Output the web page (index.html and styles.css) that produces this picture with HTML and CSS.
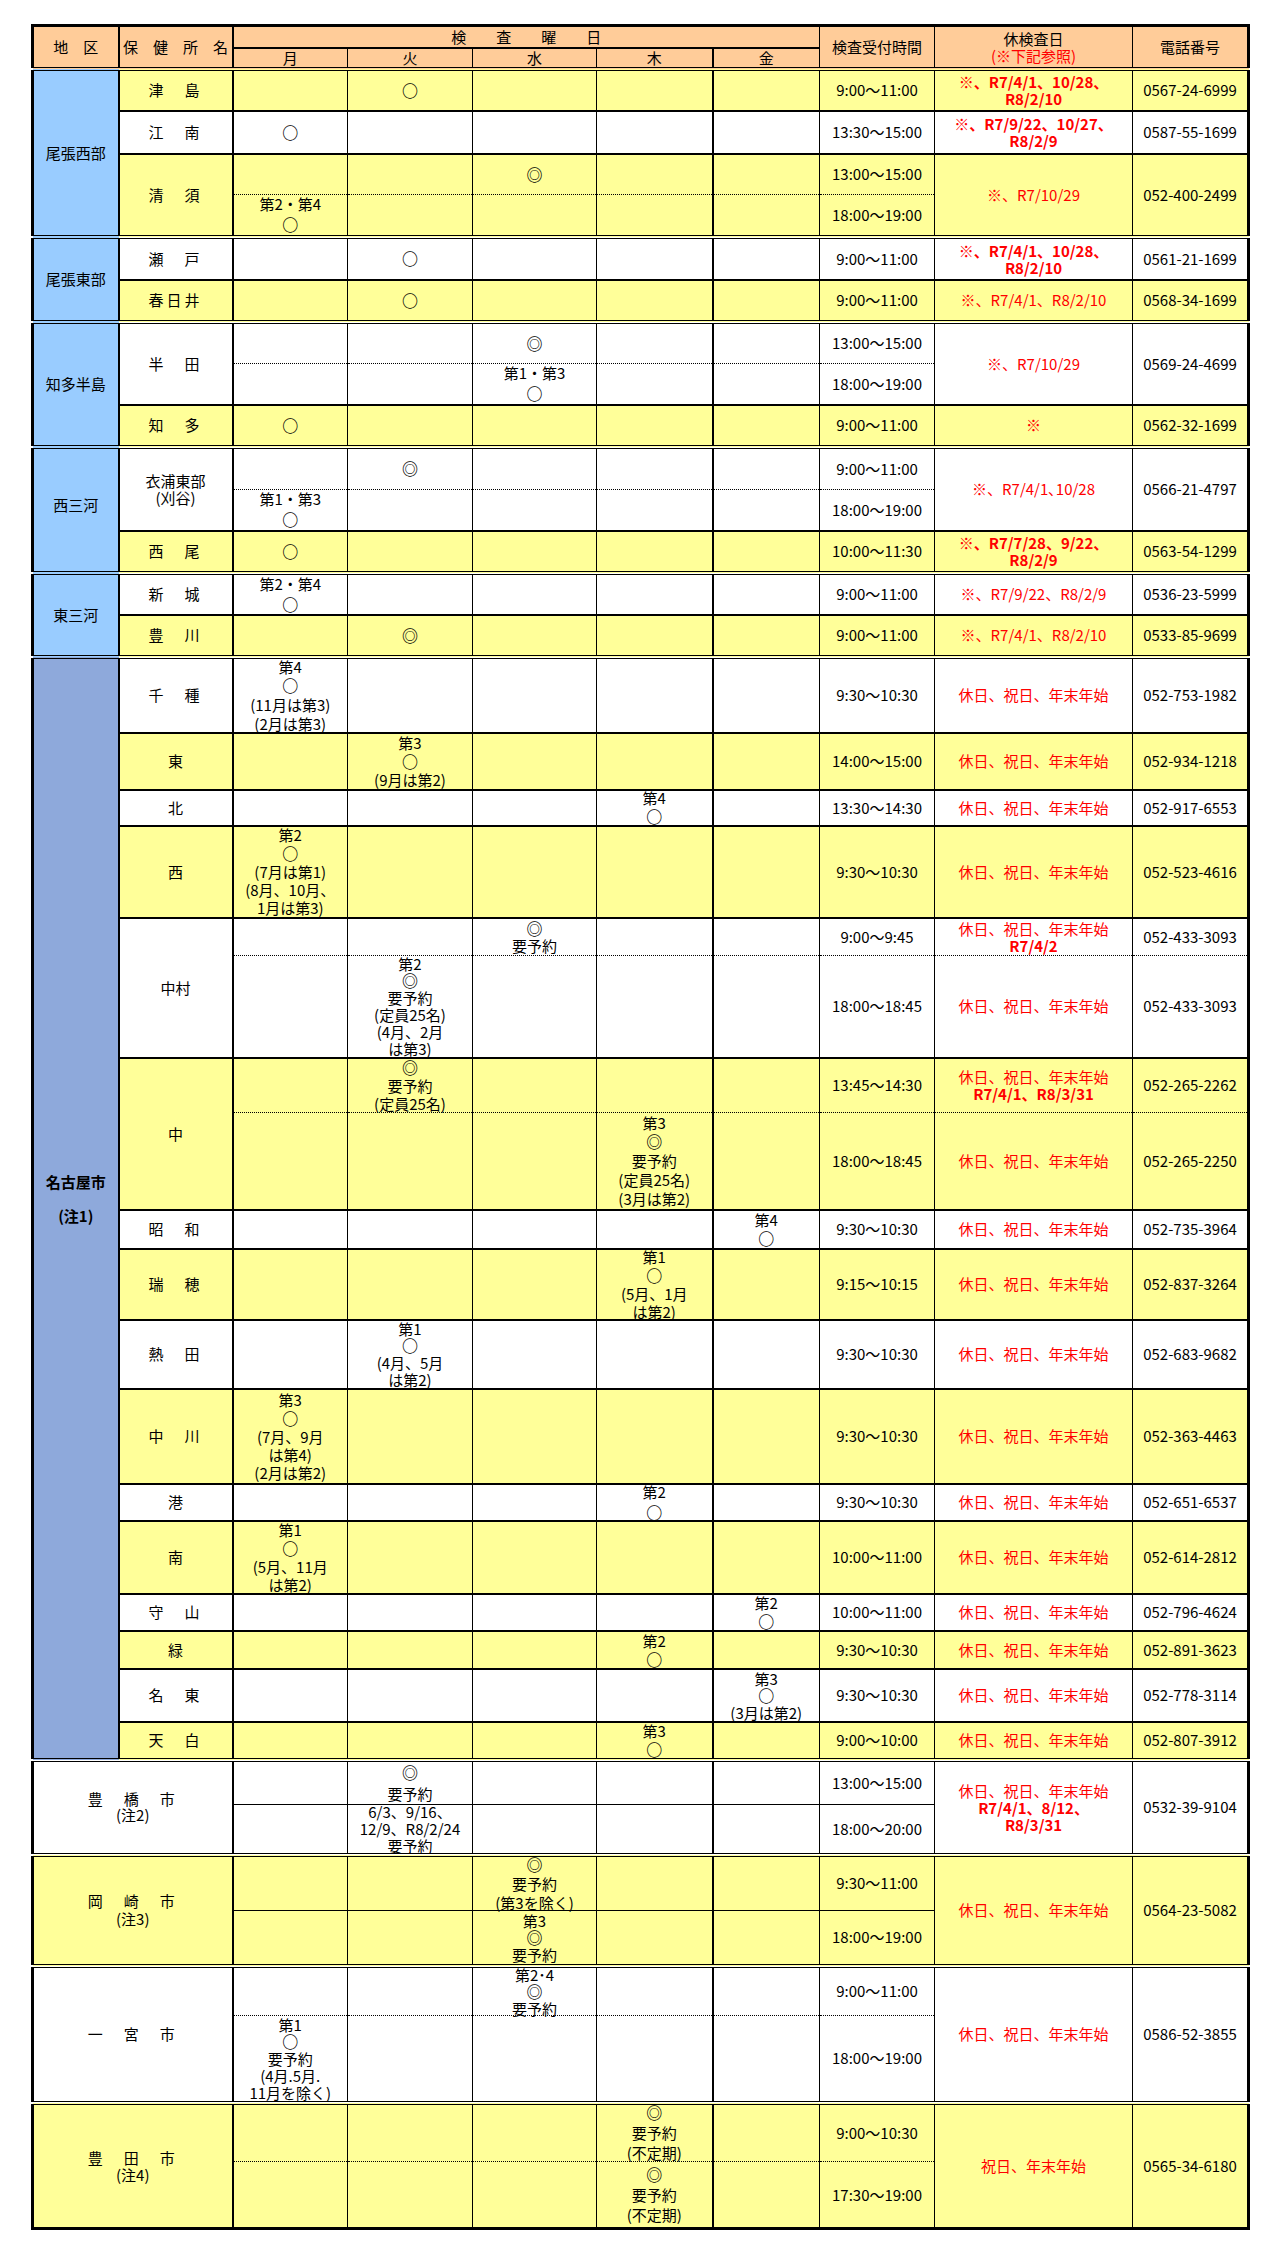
FILE: index.html
```html
<!DOCTYPE html>
<html lang="ja">
<head>
<meta charset="utf-8">
<title>検査日程一覧</title>
<link rel="stylesheet" href="styles.css">
</head>
<body>
<div class="sheet">
<table class="t">
<colgroup>
<col class="c-area b2"><col class="c-name b2"><col class="c-mon"><col class="c-tue"><col class="c-wed"><col class="c-thu b2"><col class="c-fri"><col class="c-time"><col class="c-off"><col class="c-tel">
</colgroup>
<thead>
<tr class="h22">
<th rowspan="2">地　区</th>
<th rowspan="2">保　健　所　名</th>
<th colspan="5" class="days">検　　査　　曜　　日</th>
<th rowspan="2">検査受付時間</th>
<th rowspan="2"><div class="v l17"><div>休検査日<br><span class="red">(※下記参照)</span></div></div></th>
<th rowspan="2">電話番号</th>
</tr>
<tr class="h20"><th>月</th><th>火</th><th>水</th><th>木</th><th>金</th></tr>
</thead>

<tbody class="reg">
<tr class="fac y h42">
<td rowspan="4" class="area">尾張西部</td>
<td class="sp">津　島</td>
<td></td><td><span class="o">○</span></td><td></td><td></td><td></td>
<td>9:00～11:00</td>
<td class="off"><div class="v l17"><div class="bd">※、R7/4/1、10/28、<br>R8/2/10</div></div></td>
<td>0567-24-6999</td>
</tr>
<tr class="fac h43">
<td class="sp">江　南</td>
<td><span class="o">○</span></td><td></td><td></td><td></td><td></td>
<td>13:30～15:00</td>
<td class="off"><div class="v l17"><div class="bd">※、R7/9/22、10/27、<br>R8/2/9</div></div></td>
<td>0587-55-1699</td>
</tr>
<tr class="fac y h41">
<td rowspan="2" class="sp">清　須</td>
<td class="d"></td><td class="d"></td><td class="d"><span class="o">◎</span></td><td class="d"></td><td class="d"></td>
<td class="d">13:00～15:00</td>
<td rowspan="2" class="off bd">※、R7/10/29</td>
<td rowspan="2">052-400-2499</td>
</tr>
<tr class="y h42">
<td><div class="v l20"><div>第2・第4<br><span class="o">○</span></div></div></td><td></td><td></td><td></td><td></td>
<td>18:00～19:00</td>
</tr>
</tbody>

<tbody class="reg">
<tr class="fac h43">
<td rowspan="2" class="area">尾張東部</td>
<td class="sp">瀬　戸</td>
<td></td><td><span class="o">○</span></td><td></td><td></td><td></td>
<td>9:00～11:00</td>
<td class="off"><div class="v l17"><div class="bd">※、R7/4/1、10/28、<br>R8/2/10</div></div></td>
<td>0561-21-1699</td>
</tr>
<tr class="fac y h42">
<td class="sp">春日井</td>
<td></td><td><span class="o">○</span></td><td></td><td></td><td></td>
<td>9:00～11:00</td>
<td class="off bd">※、R7/4/1、R8/2/10</td>
<td>0568-34-1699</td>
</tr>
</tbody>

<tbody class="reg">
<tr class="fac h42">
<td rowspan="3" class="area">知多半島</td>
<td rowspan="2" class="sp">半　田</td>
<td class="d"></td><td class="d"></td><td class="d"><span class="o">◎</span></td><td class="d"></td><td class="d"></td>
<td class="d">13:00～15:00</td>
<td rowspan="2" class="off bd">※、R7/10/29</td>
<td rowspan="2">0569-24-4699</td>
</tr>
<tr class="h41">
<td></td><td></td><td><div class="v l20"><div>第1・第3<br><span class="o">○</span></div></div></td><td></td><td></td>
<td>18:00～19:00</td>
</tr>
<tr class="fac y h42">
<td class="sp">知　多</td>
<td><span class="o">○</span></td><td></td><td></td><td></td><td></td>
<td>9:00～11:00</td>
<td class="off bd">※</td>
<td>0562-32-1699</td>
</tr>
</tbody>

<tbody class="reg">
<tr class="fac h43">
<td rowspan="3" class="area up10">西三河</td>
<td rowspan="2"><div class="v l17"><div>衣浦東部<br>(刈谷)</div></div></td>
<td class="d"></td><td class="d"><span class="o">◎</span></td><td class="d"></td><td class="d"></td><td class="d"></td>
<td class="d">9:00～11:00</td>
<td rowspan="2" class="off bd">※、R7/4/1､10/28</td>
<td rowspan="2">0566-21-4797</td>
</tr>
<tr class="h41">
<td><div class="v l20"><div>第1・第3<br><span class="o">○</span></div></div></td><td></td><td></td><td></td><td></td>
<td>18:00～19:00</td>
</tr>
<tr class="fac y h42">
<td class="sp">西　尾</td>
<td><span class="o">○</span></td><td></td><td></td><td></td><td></td>
<td>10:00～11:30</td>
<td class="off"><div class="v l17"><div class="bd">※、R7/7/28、9/22、<br>R8/2/9</div></div></td>
<td>0563-54-1299</td>
</tr>
</tbody>

<tbody class="reg">
<tr class="fac h42">
<td rowspan="2" class="area">東三河</td>
<td class="sp">新　城</td>
<td><div class="v l20"><div>第2・第4<br><span class="o">○</span></div></div></td><td></td><td></td><td></td><td></td>
<td>9:00～11:00</td>
<td class="off bd">※、R7/9/22、R8/2/9</td>
<td>0536-23-5999</td>
</tr>
<tr class="fac y h42">
<td class="sp">豊　川</td>
<td></td><td><span class="o">◎</span></td><td></td><td></td><td></td>
<td>9:00～11:00</td>
<td class="off bd">※、R7/4/1、R8/2/10</td>
<td>0533-85-9699</td>
</tr>
</tbody>

<tbody class="reg">
<tr class="fac h76">
<td rowspan="18" class="nagoya"><div class="v l17"><div>名古屋市<br><br>(注1)</div></div></td>
<td class="sp">千　種</td>
<td><div class="v l19"><div>第4<br><span class="o">○</span><br>(11月は第3)<br>(2月は第3)</div></div></td><td></td><td></td><td></td><td></td>
<td>9:30～10:30</td>
<td class="off">休日、祝日、年末年始</td>
<td>052-753-1982</td>
</tr>
<tr class="fac y h57">
<td>東</td>
<td></td><td><div class="v"><div>第3<br><span class="o">○</span><br>(9月は第2)</div></div></td><td></td><td></td><td></td>
<td>14:00～15:00</td>
<td class="off">休日、祝日、年末年始</td>
<td>052-934-1218</td>
</tr>
<tr class="fac h36">
<td>北</td>
<td></td><td></td><td></td><td><div class="v"><div>第4<br><span class="o">○</span></div></div></td><td></td>
<td>13:30～14:30</td>
<td class="off">休日、祝日、年末年始</td>
<td>052-917-6553</td>
</tr>
<tr class="fac y h92">
<td>西</td>
<td><div class="v"><div>第2<br><span class="o">○</span><br>(7月は第1)<br>(8月、10月、<br>1月は第3)</div></div></td><td></td><td></td><td></td><td></td>
<td>9:30～10:30</td>
<td class="off">休日、祝日、年末年始</td>
<td>052-523-4616</td>
</tr>
<tr class="fac h38">
<td rowspan="2">中村</td>
<td class="d"></td><td class="d"></td><td class="d"><div class="v l17"><div><span class="o">◎</span><br>要予約</div></div></td><td class="d"></td><td class="d"></td>
<td class="d">9:00～9:45</td>
<td class="d off"><div class="v l17"><div>休日、祝日、年末年始<br><span class="bd">R7/4/2</span></div></div></td>
<td class="d">052-433-3093</td>
</tr>
<tr class="h102">
<td></td><td><div class="v l17"><div>第2<br><span class="o">◎</span><br>要予約<br>(定員25名)<br>(4月、2月<br>は第3)</div></div></td><td></td><td></td><td></td>
<td>18:00～18:45</td>
<td class="off">休日、祝日、年末年始</td>
<td>052-433-3093</td>
</tr>
<tr class="fac y h55">
<td rowspan="2">中</td>
<td class="d"></td><td class="d"><div class="v"><div><span class="o">◎</span><br>要予約<br>(定員25名)</div></div></td><td class="d"></td><td class="d"></td><td class="d"></td>
<td class="d">13:45～14:30</td>
<td class="d off"><div class="v l17"><div>休日、祝日、年末年始<br><span class="bd">R7/4/1、R8/3/31</span></div></div></td>
<td class="d">052-265-2262</td>
</tr>
<tr class="y h97">
<td></td><td></td><td></td><td><div class="v l19"><div>第3<br><span class="o">◎</span><br>要予約<br>(定員25名)<br>(3月は第2)</div></div></td><td></td>
<td>18:00～18:45</td>
<td class="off">休日、祝日、年末年始</td>
<td>052-265-2250</td>
</tr>
<tr class="fac h39">
<td class="sp">昭　和</td>
<td></td><td></td><td></td><td></td><td><div class="v"><div>第4<br><span class="o">○</span></div></div></td>
<td>9:30～10:30</td>
<td class="off">休日、祝日、年末年始</td>
<td>052-735-3964</td>
</tr>
<tr class="fac y h71">
<td class="sp">瑞　穂</td>
<td></td><td></td><td></td><td><div class="v"><div>第1<br><span class="o">○</span><br>(5月、1月<br>は第2)</div></div></td><td></td>
<td>9:15～10:15</td>
<td class="off">休日、祝日、年末年始</td>
<td>052-837-3264</td>
</tr>
<tr class="fac h69">
<td class="sp">熱　田</td>
<td></td><td><div class="v l17"><div>第1<br><span class="o">○</span><br>(4月、5月<br>は第2)</div></div></td><td></td><td></td><td></td>
<td>9:30～10:30</td>
<td class="off">休日、祝日、年末年始</td>
<td>052-683-9682</td>
</tr>
<tr class="fac y h95">
<td class="sp">中　川</td>
<td><div class="v"><div>第3<br><span class="o">○</span><br>(7月、9月<br>は第4)<br>(2月は第2)</div></div></td><td></td><td></td><td></td><td></td>
<td>9:30～10:30</td>
<td class="off">休日、祝日、年末年始</td>
<td>052-363-4463</td>
</tr>
<tr class="fac h37">
<td>港</td>
<td></td><td></td><td></td><td><div class="v l20"><div>第2<br><span class="o">○</span></div></div></td><td></td>
<td>9:30～10:30</td>
<td class="off">休日、祝日、年末年始</td>
<td>052-651-6537</td>
</tr>
<tr class="fac y h73">
<td>南</td>
<td><div class="v"><div>第1<br><span class="o">○</span><br>(5月、11月<br>は第2)</div></div></td><td></td><td></td><td></td><td></td>
<td>10:00～11:00</td>
<td class="off">休日、祝日、年末年始</td>
<td>052-614-2812</td>
</tr>
<tr class="fac h37">
<td class="sp">守　山</td>
<td></td><td></td><td></td><td></td><td><div class="v l19"><div>第2<br><span class="o">○</span></div></div></td>
<td>10:00～11:00</td>
<td class="off">休日、祝日、年末年始</td>
<td>052-796-4624</td>
</tr>
<tr class="fac y h38">
<td>緑</td>
<td></td><td></td><td></td><td><div class="v l19"><div>第2<br><span class="o">○</span></div></div></td><td></td>
<td>9:30～10:30</td>
<td class="off">休日、祝日、年末年始</td>
<td>052-891-3623</td>
</tr>
<tr class="fac h53">
<td class="sp">名　東</td>
<td></td><td></td><td></td><td></td><td><div class="v l17"><div>第3<br><span class="o">○</span><br>(3月は第2)</div></div></td>
<td>9:30～10:30</td>
<td class="off">休日、祝日、年末年始</td>
<td>052-778-3114</td>
</tr>
<tr class="fac y h38">
<td class="sp">天　白</td>
<td></td><td></td><td></td><td><div class="v"><div>第3<br><span class="o">○</span></div></div></td><td></td>
<td>9:00～10:00</td>
<td class="off">休日、祝日、年末年始</td>
<td>052-807-3912</td>
</tr>
</tbody>

<tbody class="reg">
<tr class="fac h45">
<td colspan="2" rowspan="2"><div class="v l16"><div><span class="sp">豊　橋　市</span><br>(注2)</div></div></td>
<td class="s"></td><td class="s"><div class="v l21"><div><span class="o">◎</span><br>要予約</div></div></td><td class="s"></td><td class="s"></td><td class="s"></td>
<td class="s">13:00～15:00</td>
<td rowspan="2" class="off"><div class="v l17"><div>休日、祝日、年末年始<br><span class="bd">R7/4/1、8/12、<br>R8/3/31</span></div></div></td>
<td rowspan="2">0532-39-9104</td>
</tr>
<tr class="h50">
<td></td><td><div class="v l17"><div>6/3、9/16、<br>12/9、R8/2/24<br>要予約</div></div></td><td></td><td></td><td></td>
<td>18:00～20:00</td>
</tr>
</tbody>

<tbody class="reg">
<tr class="fac y h56">
<td colspan="2" rowspan="2"><div class="v"><div><span class="sp">岡　崎　市</span><br>(注3)</div></div></td>
<td class="s"></td><td class="s"></td><td class="s"><div class="v l19"><div><span class="o">◎</span><br>要予約<br>(第3を除く)</div></div></td><td class="s"></td><td class="s"></td>
<td class="s">9:30～11:00</td>
<td rowspan="2" class="off">休日、祝日、年末年始</td>
<td rowspan="2">0564-23-5082</td>
</tr>
<tr class="y h55">
<td></td><td></td><td><div class="v l17"><div>第3<br><span class="o">◎</span><br>要予約</div></div></td><td></td><td></td>
<td>18:00～19:00</td>
</tr>
</tbody>

<tbody class="reg">
<tr class="fac h50">
<td colspan="2" rowspan="2" class="sp">一　宮　市</td>
<td class="d"></td><td class="d"></td><td class="d"><div class="v l17"><div>第2･4<br><span class="o">◎</span><br>要予約</div></div></td><td class="d"></td><td class="d"></td>
<td class="d">9:00～11:00</td>
<td rowspan="2" class="off">休日、祝日、年末年始</td>
<td rowspan="2">0586-52-3855</td>
</tr>
<tr class="h87">
<td><div class="v l17"><div>第1<br><span class="o">○</span><br>要予約<br>(4月.5月.<br>11月を除く)</div></div></td><td></td><td></td><td></td><td></td>
<td>18:00～19:00</td>
</tr>
</tbody>

<tbody class="reg">
<tr class="fac y h59">
<td colspan="2" rowspan="2"><div class="v l17"><div><span class="sp">豊　田　市</span><br>(注4)</div></div></td>
<td class="d"></td><td class="d"></td><td class="d"></td><td class="d"><div class="v l20"><div><span class="o">◎</span><br>要予約<br>(不定期)</div></div></td><td class="d"></td>
<td class="d">9:00～10:30</td>
<td rowspan="2" class="off">祝日、年末年始</td>
<td rowspan="2">0565-34-6180</td>
</tr>
<tr class="y h67">
<td></td><td></td><td></td><td><div class="v l20"><div><span class="o">◎</span><br>要予約<br>(不定期)</div></div></td><td></td>
<td>17:30～19:00</td>
</tr>
</tbody>
</table>
</div>
</body>
</html>
```

FILE: styles.css
```css
html, body {
  margin: 0;
  padding: 0;
  background: #ffffff;
}

body {
  font-family: "Noto Sans CJK JP", "Noto Sans", sans-serif;
  font-size: 15px;
  color: #000000;
}

.sheet {
  padding: 24px 0 24px 31px;
}

.t {
  border-collapse: collapse;
  table-layout: fixed;
  width: 1216px;
  border: 3px solid #000000;
}

.t th,
.t td {
  padding: 0;
  text-align: center;
  vertical-align: middle;
  line-height: 18px;
  font-weight: 400;
  white-space: nowrap;
  border-left: 1px solid #000000;
  border-right: 1px solid #000000;
  overflow: visible;
}

.t thead th {
  background: #ffcc99;
  border-top: 1px solid #000000;
  border-bottom: 1px solid #000000;
}

.t th.days {
  border-bottom: 2px solid #000000;
}

col.c-area { width: 86px; }
col.c-name { width: 114px; }
col.c-mon  { width: 115px; }
col.c-tue  { width: 125px; }
col.c-wed  { width: 124px; }
col.c-thu  { width: 116px; }
col.c-fri  { width: 107px; }
col.c-time { width: 115px; }
col.c-off  { width: 198px; }
col.c-tel  { width: 116px; }

col.b2 {
  border-right: 2px solid #000000;
}

tbody.reg {
  border-top: 4px double #000000;
}

tr.fac {
  border-top: 2px solid #000000;
}

tr.y {
  background: #ffff99;
}

.t td.area {
  background: #99ccff;
}

.t td.nagoya {
  background: #8ea9db;
  font-weight: 700;
  padding-bottom: 20px;
}

.t td.up10 {
  padding-bottom: 10px;
}

.t td.d {
  border-bottom: 1px dotted #000000;
}

.t td.s {
  border-bottom: 1px solid #000000;
}

.off,
.red {
  color: #ff0000;
}

.bd {
  font-weight: 700;
}

.sp {
  letter-spacing: 3px;
}

.o {
  font-size: 16px;
  font-weight: 700;
}

.v {
  height: 0;
  display: flex;
  flex-direction: column;
  justify-content: center;
  align-items: center;
}

.l16 { line-height: 16px; }
.l17 { line-height: 17px; }
.l19 { line-height: 19px; }
.l20 { line-height: 20px; }
.l21 { line-height: 21px; }

tr.h20 { height: 20px; }
tr.h22 { height: 22px; }
tr.h36 { height: 36px; }
tr.h37 { height: 37px; }
tr.h38 { height: 38px; }
tr.h39 { height: 39px; }
tr.h41 { height: 41px; }
tr.h42 { height: 42px; }
tr.h43 { height: 43px; }
tr.h45 { height: 45px; }
tr.h50 { height: 50px; }
tr.h53 { height: 53px; }
tr.h55 { height: 55px; }
tr.h56 { height: 56px; }
tr.h57 { height: 57px; }
tr.h59 { height: 59px; }
tr.h67 { height: 67px; }
tr.h69 { height: 69px; }
tr.h71 { height: 71px; }
tr.h73 { height: 73px; }
tr.h76 { height: 76px; }
tr.h87 { height: 87px; }
tr.h92 { height: 92px; }
tr.h95 { height: 95px; }
tr.h97 { height: 97px; }
tr.h102 { height: 102px; }
```
